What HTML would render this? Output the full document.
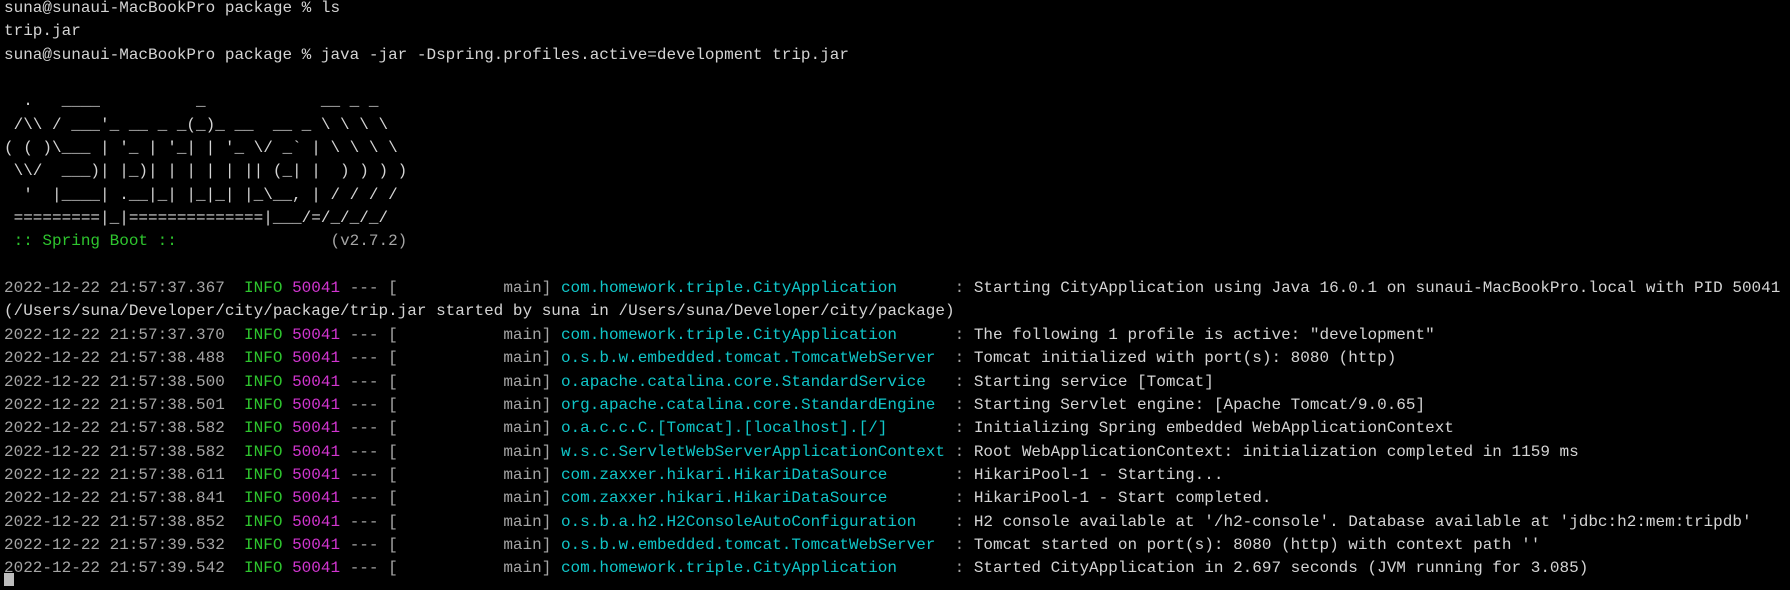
<!DOCTYPE html>
<html><head><meta charset="utf-8"><style>
html,body{margin:0;padding:0;background:#000;width:1790px;height:590px;overflow:hidden;position:relative}
pre{margin:-3px 0 0 0;padding:0 0 0 4px;font-family:"Liberation Mono","DejaVu Sans Mono",monospace;font-size:16px;line-height:23.35px;color:#d4d4d4;white-space:pre}
.d{color:#a5a5a5}.g{color:#2ec52e}.m{color:#d235d0}.c{color:#10c5c8}
.cur{position:absolute;left:4px;top:576px;width:10px;height:13px;background:#bdbdbd}
</style></head><body><pre>suna@sunaui-MacBookPro package % ls
trip.jar
suna@sunaui-MacBookPro package % java -jar -Dspring.profiles.active=development trip.jar

  .   ____          _            __ _ _
 /\\ / ___'_ __ _ _(_)_ __  __ _ \ \ \ \
( ( )\___ | '_ | '_| | '_ \/ _` | \ \ \ \
 \\/  ___)| |_)| | | | | || (_| |  ) ) ) )
  '  |____| .__|_| |_|_| |_\__, | / / / /
 =========|_|==============|___/=/_/_/_/
<span class="g"> :: Spring Boot :: </span><span class="d">               (v2.7.2)</span>

<span class="d">2022-12-22 21:57:37.367 </span> <span class="g">INFO</span> <span class="m">50041</span> <span class="d">--- [           main]</span> <span class="c">com.homework.triple.CityApplication     </span> <span class="d">:</span> Starting CityApplication using Java 16.0.1 on sunaui-MacBookPro.local with PID 50041
(/Users/suna/Developer/city/package/trip.jar started by suna in /Users/suna/Developer/city/package)
<span class="d">2022-12-22 21:57:37.370 </span> <span class="g">INFO</span> <span class="m">50041</span> <span class="d">--- [           main]</span> <span class="c">com.homework.triple.CityApplication     </span> <span class="d">:</span> The following 1 profile is active: "development"
<span class="d">2022-12-22 21:57:38.488 </span> <span class="g">INFO</span> <span class="m">50041</span> <span class="d">--- [           main]</span> <span class="c">o.s.b.w.embedded.tomcat.TomcatWebServer </span> <span class="d">:</span> Tomcat initialized with port(s): 8080 (http)
<span class="d">2022-12-22 21:57:38.500 </span> <span class="g">INFO</span> <span class="m">50041</span> <span class="d">--- [           main]</span> <span class="c">o.apache.catalina.core.StandardService  </span> <span class="d">:</span> Starting service [Tomcat]
<span class="d">2022-12-22 21:57:38.501 </span> <span class="g">INFO</span> <span class="m">50041</span> <span class="d">--- [           main]</span> <span class="c">org.apache.catalina.core.StandardEngine </span> <span class="d">:</span> Starting Servlet engine: [Apache Tomcat/9.0.65]
<span class="d">2022-12-22 21:57:38.582 </span> <span class="g">INFO</span> <span class="m">50041</span> <span class="d">--- [           main]</span> <span class="c">o.a.c.c.C.[Tomcat].[localhost].[/]      </span> <span class="d">:</span> Initializing Spring embedded WebApplicationContext
<span class="d">2022-12-22 21:57:38.582 </span> <span class="g">INFO</span> <span class="m">50041</span> <span class="d">--- [           main]</span> <span class="c">w.s.c.ServletWebServerApplicationContext</span> <span class="d">:</span> Root WebApplicationContext: initialization completed in 1159 ms
<span class="d">2022-12-22 21:57:38.611 </span> <span class="g">INFO</span> <span class="m">50041</span> <span class="d">--- [           main]</span> <span class="c">com.zaxxer.hikari.HikariDataSource      </span> <span class="d">:</span> HikariPool-1 - Starting...
<span class="d">2022-12-22 21:57:38.841 </span> <span class="g">INFO</span> <span class="m">50041</span> <span class="d">--- [           main]</span> <span class="c">com.zaxxer.hikari.HikariDataSource      </span> <span class="d">:</span> HikariPool-1 - Start completed.
<span class="d">2022-12-22 21:57:38.852 </span> <span class="g">INFO</span> <span class="m">50041</span> <span class="d">--- [           main]</span> <span class="c">o.s.b.a.h2.H2ConsoleAutoConfiguration   </span> <span class="d">:</span> H2 console available at '/h2-console'. Database available at 'jdbc:h2:mem:tripdb'
<span class="d">2022-12-22 21:57:39.532 </span> <span class="g">INFO</span> <span class="m">50041</span> <span class="d">--- [           main]</span> <span class="c">o.s.b.w.embedded.tomcat.TomcatWebServer </span> <span class="d">:</span> Tomcat started on port(s): 8080 (http) with context path ''
<span class="d">2022-12-22 21:57:39.542 </span> <span class="g">INFO</span> <span class="m">50041</span> <span class="d">--- [           main]</span> <span class="c">com.homework.triple.CityApplication     </span> <span class="d">:</span> Started CityApplication in 2.697 seconds (JVM running for 3.085)
</pre><div class="cur"></div></body></html>
